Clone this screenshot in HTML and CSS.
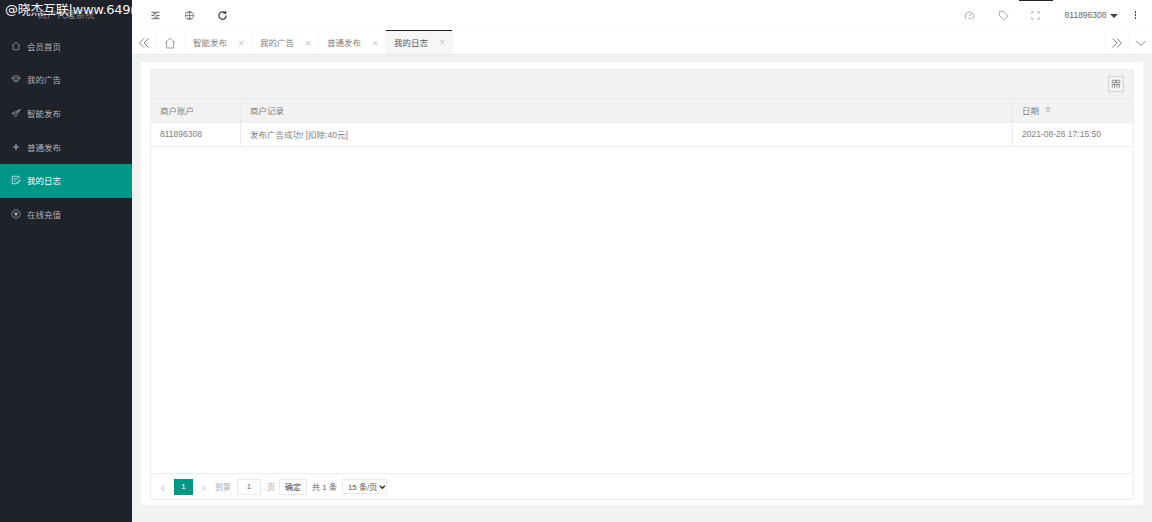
FILE: index.html
```html
<!DOCTYPE html>
<html lang="zh">
<head>
<meta charset="utf-8">
<title>我的日志</title>
<link rel="stylesheet" href="styles.css">
</head>
<body>
<div class="app">
  <aside class="side">
    <div class="logo">商户代理系统</div>
    <div class="mark">@晓杰互联|www.649m</div>
    <nav class="menu">
      <a class="item"><svg viewBox="0 0 12 12"><path d="M1 6 6 1.500 11 6M2.500 5v5.500h7V5"/></svg>会员首页</a>
      <a class="item"><svg viewBox="0 0 12 12"><path d="M3 2.500h6l2 2.500-5 5.500L1 5zM1 5h10M3.500 7.500h5"/></svg>我的广告</a>
      <a class="item"><svg viewBox="0 0 12 12"><path d="M11 2 1 6.500l3 1L5.500 10.500zM4 7.500 11 2"/></svg>智能发布</a>
      <a class="item"><svg viewBox="0 0 12 12"><path class="bold" d="M6 2.500v7M2.500 6h7"/></svg>普通发布</a>
      <a class="item on"><svg viewBox="0 0 12 12"><path d="M9.500 5V1.500h-8v9h5M3.500 4.500h4M3.500 7h2M7 10.500l.5-2L10 6l1 1-2.500 2.500z"/></svg>我的日志</a>
      <a class="item"><svg viewBox="0 0 12 12"><circle cx="6" cy="6" r="5"/><path class="bold" d="M4 4l2 2 2-2M6 6v3M4.500 6.500h3"/></svg>在线充值</a>
    </nav>
  </aside>
  <div class="main">
    <header class="top">
      <div class="tools">
        <svg class="ti dark" viewBox="0 0 12 12"><path d="M1.500 2.500h9M1.500 6h3.500M7 6h3.500M1.500 9.500h9M3 4.200h4.500M4.500 7.800h4.500"/></svg>
        <svg class="ti" viewBox="0 0 12 12"><circle cx="6" cy="6" r="4.500"/><path d="M1.500 6h9M6 1.500v9M3 3h6M3 9h6"/></svg>
        <svg class="ti dark" viewBox="0 0 12 12"><path class="bold" d="M10 6a4 4 0 1 1-1.200-2.800M9.500 1v2.500H7"/></svg>
      </div>
      <div class="right">
        <svg class="ti light" viewBox="0 0 12 12"><path d="M2.500 10a4.700 4.700 0 1 1 7 0M6 6.500 8 4M5 9h3"/></svg>
        <svg class="ti light" viewBox="0 0 12 12"><path d="M1.500 1.500h4.500l5 5-4.500 4.500-5-5zM3.500 3.500h.5"/></svg>
        <div class="full"><svg class="ti light" viewBox="0 0 12 12"><path d="M2 4V2h2M8 2h2v2M10 8v2H8M4 10H2V8"/></svg></div>
        <div class="user">811896308<i class="caret"></i></div>
        <div class="dots"><b></b><b></b><b></b></div>
      </div>
    </header>
    <div class="tabs">
      <div class="tb tbl"><svg viewBox="0 0 12 12"><path d="M6 1.500 1.500 6 6 10.500M10.500 1.500 6 6l4.500 4.500"/></svg></div>
      <div class="tb home"><svg viewBox="0 0 12 12"><path d="M.800 6 6 1l5.200 5M2.500 5v6h7V5"/></svg></div>
      <div class="tab">智能发布<span class="x">×</span></div>
      <div class="tab">我的广告<span class="x">×</span></div>
      <div class="tab">普通发布<span class="x">×</span></div>
      <div class="tab now">我的日志<span class="x">×</span></div>
      <div class="grow"></div>
      <div class="tb tbr"><svg viewBox="0 0 12 12"><path d="M6 1.500 10.500 6 6 10.500M1.500 1.500 6 6l-4.500 4.500"/></svg></div>
      <div class="tb tbr"><svg viewBox="0 0 12 12"><path d="M1.500 4 6 8.500 10.500 4"/></svg></div>
    </div>
    <section class="page">
      <div class="card">
        <div class="grid">
          <div class="bar"><span class="cols"><svg viewBox="0 0 12 12"><path d="M1.500 1.500h4v3h-4zM6.500 1.500h4v3h-4zM1.500 6.500v4M4.200 6.500v4M7 6.500v4M10 6.500v4M1.500 6.500h9"/></svg></span></div>
          <div class="row head">
            <div class="c c1">商户账户</div>
            <div class="c c2">商户记录</div>
            <div class="c c3">日期<span class="sort"><i class="up"></i><i class="down"></i></span></div>
          </div>
          <div class="row">
            <div class="c c1">811896308</div>
            <div class="c c2">发布广告成功! [扣除:40元]</div>
            <div class="c c3">2021-08-26 17:15:50</div>
          </div>
          <div class="blank"></div>
          <div class="pager">
            <span class="arr">‹</span>
            <span class="cur">1</span>
            <span class="arr">›</span>
            <span class="lab">到第</span>
            <span class="inp">1</span>
            <span class="lab">页</span>
            <span class="ok">确定</span>
            <span class="tot">共 1 条</span>
            <div class="sel">15 条/页<svg viewBox="0 0 8 6"><path d="M1 1.500 4 4.500 7 1.500"/></svg></div>
          </div>
        </div>
      </div>
    </section>
  </div>
</div>
</body>
</html>
```
FILE: styles.css
```css
* { box-sizing: border-box; }
html, body { margin: 0; height: 100%; overflow: hidden; }
body { font-family: "Liberation Sans", "Noto Sans CJK SC", sans-serif; font-size: 8.500px; color: #666; }
svg { fill: none; stroke: currentColor; stroke-width: .8; display: block; }
svg .bold { stroke-width: 1.300; }
.app { display: flex; height: 522px; }
.side { position: relative; width: 132px; flex: none; background: #20222a; overflow: hidden; }
.logo { height: 30px; line-height: 30px; text-align: center; color: #85868b; font-size: 9.500px; }
.mark { position: absolute; left: 5px; top: 1px; color: #f4f4f4; font-size: 13px; line-height: 18px; white-space: nowrap; font-family: "DejaVu Sans", "Noto Sans CJK SC", sans-serif; letter-spacing: -.3px; }
.menu { display: flex; flex-direction: column; }
.item { display: flex; align-items: center; gap: 6px; height: 33.600px; padding: 0 0 2px 11px; color: #b0b1b5; }
.item svg { width: 10px; height: 10px; flex: none; }
.item.on { background: #009688; color: #fff; }
.main { flex: 1; min-width: 0; display: flex; flex-direction: column; background: #f2f2f2; }
.top { height: 30px; flex: none; background: #fff; display: flex; justify-content: space-between; align-items: stretch; }
.tools { display: flex; align-items: center; gap: 22.500px; padding-left: 18px; }
.ti { width: 11px; height: 11px; color: #666; }
.ti.dark { color: #333; }
.ti.light { color: #888; }
.right { display: flex; align-items: center; }
.right > .ti:first-child { margin-right: 23px; }
.right > .ti:nth-child(2) { margin-right: 10px; }
.full { width: 34px; height: 30px; display: flex; align-items: center; justify-content: center; border-top: 1px solid #20222a; margin-right: 12px; }
.user { display: flex; align-items: center; gap: 2px; color: #666; }
.caret { width: 0; height: 0; margin-top: 1px; margin-left: 1px; border: 4px solid transparent; border-top-color: #444; border-bottom: 0; }
.dots { display: flex; flex-direction: column; gap: 1.500px; margin: 0 16px 0 17px; }
.dots b { width: 1.500px; height: 1.500px; background: #444; }
.tabs { height: 25px; flex: none; background: #fff; border-top: 1px solid #fafafa; border-bottom: 1px solid #e8e8e8; display: flex; align-items: stretch; }
.tb { display: flex; align-items: center; justify-content: center; color: #666; }
.tb svg { width: 12px; height: 12px; stroke-width: .8; }
.tbl { width: 24px; border-right: 1px solid #f8f8f8; }
.home { width: 29px; border-right: 1px solid #f8f8f8; color: #888; }
.tbr { width: 24px; border-left: 1px solid #f8f8f8; }
.tab { display: flex; align-items: center; width: 67px; padding: 0 0 1px 8px; color: #808080; border-right: 1px solid #f8f8f8; white-space: nowrap; }
.x { margin-left: auto; margin-right: 7px; padding-top: 2px; color: #c2c2c2; font-size: 10px; }
.tab.now { background: #f6f6f6; color: #555; box-shadow: inset 0 1px 0 #20222a; margin-top: -1px; }
.grow { flex: 1; }
.page { flex: 1; min-height: 0; padding: 7px 9px 17px; }
.card { height: 100%; background: #fff; padding: 7px 9px 5px; }
.grid { height: 100%; display: flex; flex-direction: column; border: 1px solid #eee; }
.bar { height: 29px; flex: none; background: #f2f2f2; border-bottom: 1px solid #eaeaea; display: flex; align-items: center; justify-content: flex-end; padding-right: 9px; }
.cols { width: 16px; height: 16px; border: 1px solid #d2d2d2; display: flex; align-items: center; justify-content: center; color: #666; }
.cols svg { width: 10px; height: 10px; }
.row { display: flex; height: 23.500px; flex: none; border-bottom: 1px solid #eee; align-items: stretch; }
.row.head { background: #f2f2f2; height: 24px; }
.c { display: flex; align-items: center; padding: 0 0 1px 9px; color: #808080; }
.head .c { padding-bottom: 2px; }
.c1 { width: 90px; flex: none; border-right: 1px solid #eaeaea; }
.c2 { flex: 1; border-right: 1px solid #eaeaea; }
.c3 { width: 120px; flex: none; }
.sort { display: inline-flex; flex-direction: column; gap: 1px; margin-left: 6px; }
.up { width: 0; height: 0; border: 3px solid transparent; border-bottom-color: #c2c2c2; border-top: 0; }
.down { width: 0; height: 0; border: 3px solid transparent; border-top-color: #c2c2c2; border-bottom: 0; }
.blank { flex: 1; border-bottom: 1px solid #eee; }
.pager { height: 25px; flex: none; display: flex; align-items: center; padding-left: 5px; font-size: 8px; color: #888; }
.arr { width: 14px; text-align: center; color: #d2d2d2; font-size: 15px; line-height: 16px; }
.cur { width: 19px; height: 16px; margin-left: 4px; background: #009688; color: #fff; text-align: center; line-height: 16px; }
.cur + .arr { margin: 0 4px 0 4px; }
.lab { color: #aaa; }
.inp { width: 24px; height: 16px; margin: 0 6px; border: 1px solid #eaeaea; text-align: center; line-height: 14px; color: #666; }
.ok { height: 16px; margin-left: 4px; padding: 0 5px; border: 1px solid #eaeaea; line-height: 15px; color: #444; }
.tot { margin-left: 5px; color: #666; }
.sel { display: flex; align-items: center; height: 15px; width: 45px; margin-left: 5px; padding-left: 5px; color: #555; background: #fff; border: 1px solid #eaeaea; white-space: nowrap; }
.sel svg { width: 8px; height: 6px; margin-left: 2px; color: #222; stroke-width: 1.500; }
```
